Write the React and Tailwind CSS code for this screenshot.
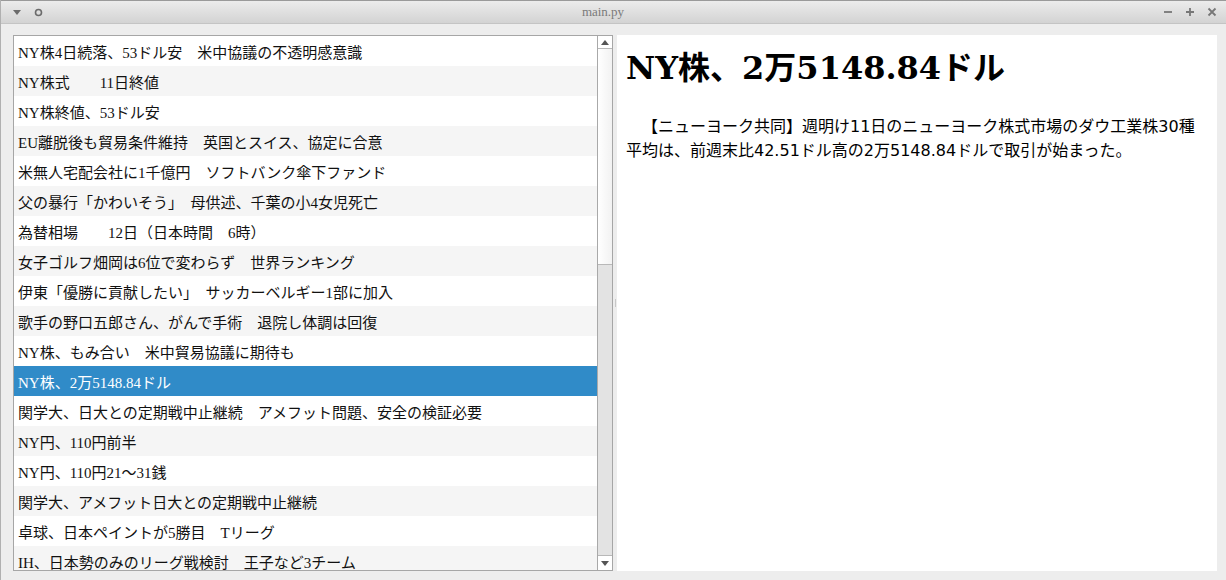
import { useState } from 'react';

const headlines = [
  'NY株4日続落、53ドル安　米中協議の不透明感意識',
  'NY株式　　11日終値',
  'NY株終値、53ドル安',
  'EU離脱後も貿易条件維持　英国とスイス、協定に合意',
  '米無人宅配会社に1千億円　ソフトバンク傘下ファンド',
  '父の暴行「かわいそう」　母供述、千葉の小4女児死亡',
  '為替相場　　12日（日本時間　6時）',
  '女子ゴルフ畑岡は6位で変わらず　世界ランキング',
  '伊東「優勝に貢献したい」　サッカーベルギー1部に加入',
  '歌手の野口五郎さん、がんで手術　退院し体調は回復',
  'NY株、もみ合い　米中貿易協議に期待も',
  'NY株、2万5148.84ドル',
  '関学大、日大との定期戦中止継続　アメフット問題、安全の検証必要',
  'NY円、110円前半',
  'NY円、110円21～31銭',
  '関学大、アメフット日大との定期戦中止継続',
  '卓球、日本ペイントが5勝目　Tリーグ',
  'IH、日本勢のみのリーグ戦検討　王子など3チーム',
];

function TitleBar() {
  return (
    <div className="h-[24px] flex items-center border-t border-[#9a9a9a] border-b border-b-[#c4c4c4] bg-gradient-to-b from-[#ececec] to-[#d3d3d3] relative">
      <div className="flex items-center gap-[12px] pl-[11px]">
        <svg width="10" height="8" viewBox="0 0 10 8">
          <path d="M1 2 L9 2 L5 7 Z" fill="#6b6b6b" />
        </svg>
        <svg width="9" height="9" viewBox="0 0 9 9">
          <circle cx="4.5" cy="4.5" r="3" fill="none" stroke="#6b6b6b" strokeWidth="1.6" />
        </svg>
      </div>
      <div className="flex-1 text-center text-[13px] text-[#7a7a7a] font-['Liberation_Serif',serif]">main.py</div>
      <div className="flex items-center gap-[12px] pr-[9px]">
        <svg width="10" height="10" viewBox="0 0 10 10">
          <path d="M1 5 H9" stroke="#777" strokeWidth="1.8" />
        </svg>
        <svg width="10" height="10" viewBox="0 0 10 10">
          <path d="M1 5 H9 M5 1 V9" stroke="#777" strokeWidth="1.8" />
        </svg>
        <svg width="10" height="10" viewBox="0 0 10 10">
          <path d="M1.5 1.5 L8.5 8.5 M8.5 1.5 L1.5 8.5" stroke="#777" strokeWidth="1.8" />
        </svg>
      </div>
    </div>
  );
}

function Scrollbar() {
  return (
    <div className="w-[15px] flex flex-col border-l border-[#a9a9a9] bg-[#e3e3e3]">
      <div className="h-[13px] flex items-center justify-center border-b border-[#b8b8b8] bg-white">
        <svg width="8" height="5" viewBox="0 0 8 5">
          <path d="M0 5 L4 0 L8 5 Z" fill="#555" />
        </svg>
      </div>
      <div className="h-[216px] border-b border-[#b8b8b8] bg-gradient-to-r from-white to-[#f2f2f2]" />
      <div className="flex-1" />
      <div className="h-[15px] flex items-center justify-center border-t border-[#b8b8b8] bg-white">
        <svg width="8" height="5" viewBox="0 0 8 5">
          <path d="M0 0 L8 0 L4 5 Z" fill="#555" />
        </svg>
      </div>
    </div>
  );
}

export default function App() {
  const [selected, setSelected] = useState(11);

  return (
    <div className="w-[1226px] h-[580px] overflow-hidden bg-[#ededed] flex flex-col border-l border-[#b0b0b0]">
      <TitleBar />
      <div className="flex-1 flex pt-[11px] pl-[12px] pr-[9px] pb-[9px] min-h-0">
        <div className="w-[600px] flex border border-[#a6a6a6] bg-white min-h-0">
          <div className="flex-1 overflow-hidden font-['Liberation_Serif','Noto_Sans_CJK_JP',serif] text-[15px] text-[#111]">
            {headlines.map((h, i) => (
              <div
                key={i}
                onClick={() => setSelected(i)}
                className={
                  i === selected
                    ? 'h-[30px] flex items-center pl-[4px] pt-[4px] whitespace-nowrap bg-[#308bc8] text-white'
                    : i % 2 === 1
                    ? 'h-[30px] flex items-center pl-[4px] pt-[4px] whitespace-nowrap bg-[#f5f5f5]'
                    : 'h-[30px] flex items-center pl-[4px] pt-[4px] whitespace-nowrap bg-white'
                }
              >
                {h}
              </div>
            ))}
          </div>
          <Scrollbar />
        </div>
        <div className="w-[4px] flex items-center justify-center">
          <div className="w-[1px] h-[8px] bg-[#c8c8c8]" />
        </div>
        <div className="w-[600px] bg-white px-[9px] pt-[13px] text-black">
          <h1 className="text-[32px] leading-[40px] font-bold font-['DejaVu_Serif','Noto_Sans_CJK_JP',serif]">
            NY株、2万5148.84ドル
          </h1>
          <p className="mt-[27px] indent-[16px] text-[16px] leading-[24px] font-['DejaVu_Sans','Noto_Sans_CJK_JP',sans-serif]">
            【ニューヨーク共同】週明け11日のニューヨーク株式市場のダウ工業株30種平均は、前週末比42.51ドル高の2万5148.84ドルで取引が始まった。
          </p>
        </div>
      </div>
    </div>
  );
}
